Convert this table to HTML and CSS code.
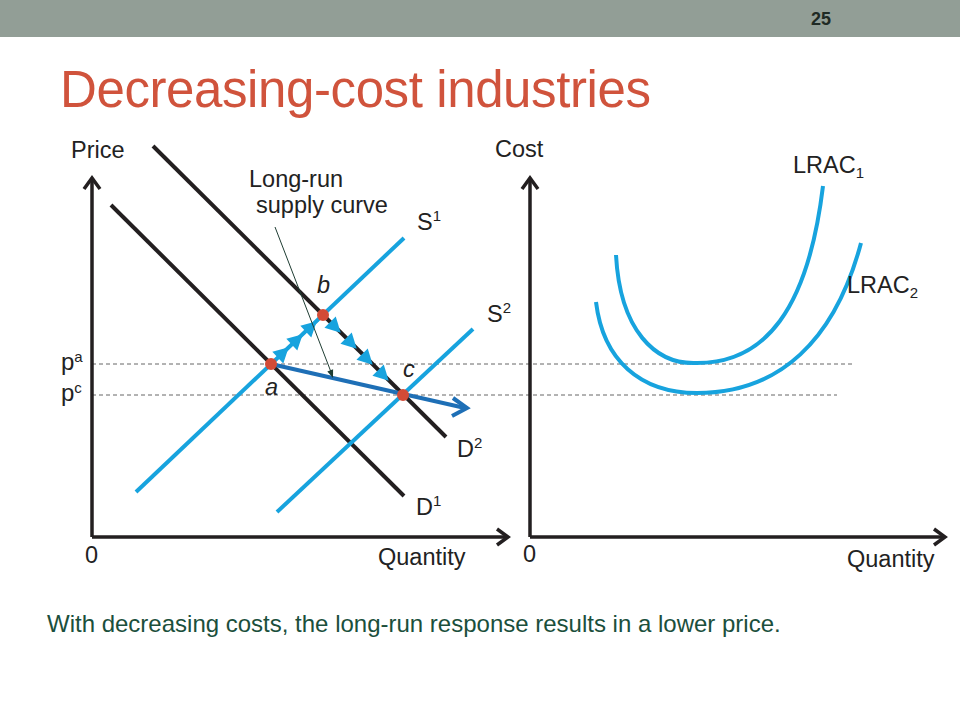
FILE: index.html
```html
<!DOCTYPE html>
<html>
<head>
<meta charset="utf-8">
<link rel="stylesheet" href="styles.css">
</head>
<body>
<div class="slide">
  <header class="topbar"><span class="num">25</span></header>
  <h1 class="title">Decreasing-cost industries</h1>
  <div class="charts">
    <svg class="chart-svg" width="960" height="460" viewBox="0 130 960 460" xmlns="http://www.w3.org/2000/svg">
      <defs>
        <path id="tri" d="M1,0 L-14,-8 L-14,8 Z"/>
      </defs>
      <!-- dashed price lines -->
      <g class="dash">
        <line x1="92" y1="364" x2="853" y2="364"/>
        <line x1="92" y1="395" x2="837" y2="395"/>
      </g>
      <!-- axes -->
      <g class="axis">
        <path d="M92,537 V179 M92,537 H507"/>
        <path d="M84,189 L92,178 L100,189"/>
        <path d="M497,529 L508,537 L497,545"/>
        <path d="M530,537 V179 M530,537 H944"/>
        <path d="M522,189 L530,178 L538,189"/>
        <path d="M934,529 L945,537 L934,545"/>
      </g>
      <!-- demand -->
      <g class="demand">
        <line x1="153" y1="146" x2="446" y2="437"/>
        <line x1="111" y1="205" x2="404" y2="496"/>
      </g>
      <!-- supply -->
      <g class="supply">
        <line x1="136" y1="492" x2="404" y2="238"/>
        <line x1="277" y1="512" x2="473" y2="329"/>
      </g>
      <!-- small arrows a->b and b->c -->
      <g class="steps">
        <line x1="271" y1="364" x2="318" y2="320"/>
        <use href="#tri" transform="translate(288,348) rotate(-43.3)"/>
        <use href="#tri" transform="translate(302,335) rotate(-43.3)"/>
        <use href="#tri" transform="translate(316,322) rotate(-43.3)"/>
        <use href="#tri" transform="translate(340,332) rotate(45)"/>
        <use href="#tri" transform="translate(356,348) rotate(45)"/>
        <use href="#tri" transform="translate(372,364) rotate(45)"/>
        <use href="#tri" transform="translate(388,380) rotate(45)"/>
      </g>
      <!-- long-run supply -->
      <g class="lrs">
        <line x1="271" y1="364" x2="465" y2="408"/>
        <path d="M453,398 L467,408 L452,416"/>
      </g>
      <!-- pointer -->
      <line class="pointer" x1="275" y1="227" x2="331" y2="372"/>
      <polygon class="pointer-head" points="333,378 327.3,371.4 333.1,369.2"/>
      <!-- equilibrium points -->
      <g class="pt">
        <circle cx="271" cy="364" r="6"/>
        <circle cx="323" cy="315" r="6"/>
        <circle cx="403" cy="395" r="6"/>
      </g>
      <!-- LRAC curves -->
      <g class="lrac">
        <path d="M616,255 C620,330 655,365 697,363 C765,363 808,310 823,186"/>
        <path d="M596,302 C603,360 640,393 697,393 C780,393 835,340 861,243"/>
      </g>
      <!-- labels -->
      <g class="lbl">
        <text x="71" y="158">Price</text>
        <text x="495" y="157">Cost</text>
        <text x="249" y="187">Long-run</text>
        <text x="256" y="213">supply curve</text>
        <text x="417" y="230">S<tspan class="sup" dy="-9">1</tspan></text>
        <text x="487" y="322">S<tspan class="sup" dy="-9">2</tspan></text>
        <text x="457" y="457">D<tspan class="sup" dy="-9">2</tspan></text>
        <text x="416" y="515">D<tspan class="sup" dy="-9">1</tspan></text>
        <text class="it" x="317" y="293">b</text>
        <text class="it" x="265" y="395">a</text>
        <text class="it" x="403" y="377">c</text>
        <text class="p" x="61" y="370">p<tspan class="sup" dy="-8">a</tspan></text>
        <text class="p" x="61" y="401">p<tspan class="sup" dy="-8">c</tspan></text>
        <text x="85" y="563">0</text>
        <text x="378" y="565">Quantity</text>
        <text x="523" y="562">0</text>
        <text x="847" y="567">Quantity</text>
        <text x="793" y="173">LRAC<tspan class="sub" dy="5">1</tspan></text>
        <text x="847" y="293">LRAC<tspan class="sub" dy="5">2</tspan></text>
      </g>
    </svg>
  </div>
  <p class="caption">With decreasing costs, the long-run response results in a lower price.</p>
</div>
</body>
</html>
```
FILE: styles.css
```css
html, body {
  margin: 0;
  padding: 0;
  background: #ffffff;
}
body {
  font-family: "Liberation Sans", Arial, sans-serif;
  width: 960px;
  height: 720px;
  overflow: hidden;
}
.slide {
  display: flex;
  flex-direction: column;
  width: 960px;
  height: 720px;
}
.topbar {
  height: 37px;
  background: #929e96;
  display: flex;
  align-items: center;
  padding-left: 811px;
  box-sizing: border-box;
}
.num {
  font-weight: bold;
  font-size: 18px;
  color: #1f2a24;
  line-height: 1;
}
.title {
  margin: 23px 0 0 60px;
  font-weight: normal;
  font-size: 51px;
  line-height: 60px;
  letter-spacing: -0.4px;
  color: #d0533c;
}
.charts {
  margin-top: 10px;
  height: 460px;
}
.chart-svg {
  display: block;
}
.dash line {
  stroke: #666;
  stroke-width: 1;
  stroke-dasharray: 4 3;
}
.axis path {
  stroke: #231f20;
  stroke-width: 3.5;
  fill: none;
}
.demand line {
  stroke: #231f20;
  stroke-width: 4;
}
.supply line {
  stroke: #17a3de;
  stroke-width: 4;
}
.steps line {
  stroke: #17a3de;
  stroke-width: 3;
}
.steps use {
  fill: #17a3de;
}
.lrs line, .lrs path {
  stroke: #1e6fb6;
  stroke-width: 4;
  fill: none;
}
.pointer {
  stroke: #1f3d33;
  stroke-width: 1;
}
.pointer-head {
  fill: #1f3d33;
}
.pt circle {
  fill: #d24b37;
}
.lrac path {
  stroke: #17a3de;
  stroke-width: 4;
  fill: none;
}
.lbl text {
  font-family: "Liberation Sans", Arial, sans-serif;
  font-size: 23.5px;
  fill: #222;
}
.lbl .it {
  font-style: italic;
}
.lbl .p {
  font-size: 24px;
}
.lbl .sup, .lbl .sub {
  font-size: 15px;
}
.caption {
  margin: 20px 0 0 47px;
  font-size: 24px;
  line-height: 28px;
  color: #1b4f3c;
}
```
